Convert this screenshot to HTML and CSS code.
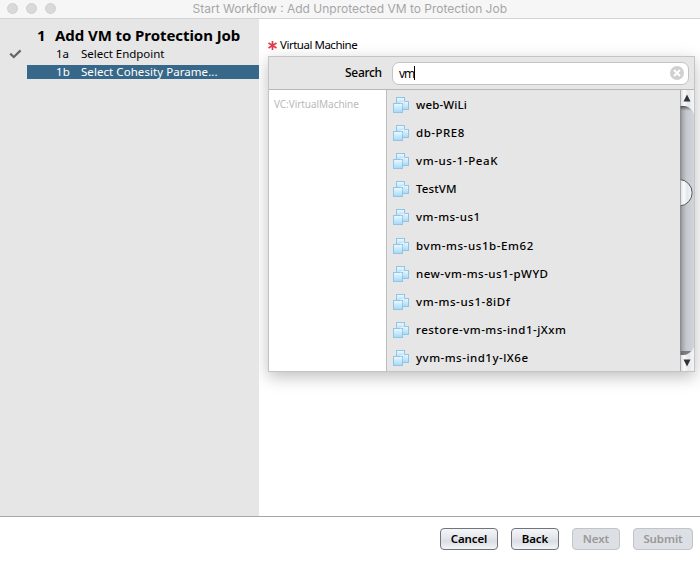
FILE: index.html
```html
<!DOCTYPE html>
<html lang="en">
<head>
<meta charset="utf-8">
<title>Start Workflow</title>
<link rel="stylesheet" href="styles.css">
</head>
<body>
<svg width="0" height="0" class="defs">
  <defs>
    <linearGradient id="blue" x1="0" y1="0" x2="0" y2="1"><stop offset="0" stop-color="#eff9ff"/><stop offset="1" stop-color="#a0d9fb"/></linearGradient>
    <symbol id="vm" viewBox="0 0 16 16">
      <g fill="url(#blue)" stroke="#93c5e3" stroke-width="1">
        <rect x="3.5" y="0.5" width="8" height="8"/>
        <rect x="7.5" y="4.5" width="8" height="8"/>
        <rect x="0.5" y="6.5" width="9" height="9"/>
      </g>
      <path d="M7.500 6.500V4.500H11.500V8.500H9.500" fill="none" stroke="#c8e6f7"/>
    </symbol>
  </defs>
</svg>
<header class="titlebar">
  <div class="lights"><i></i><i></i><i></i></div>
  <h1><span>Start Workflow : Add Unprotected VM to Protection Job</span></h1>
</header>
<main class="body">
  <nav class="steps">
    <div class="step head"><span class="num">1</span><span class="label">Add VM to Protection Job</span></div>
    <div class="step done">
      <svg class="check" width="13" height="10" viewBox="0 0 13 10"><path d="M1.2 4.6 4.8 8 11.6 1.4" fill="none" stroke="#666" stroke-width="2.2"/></svg>
      <span class="num">1a</span><span class="label">Select Endpoint</span>
    </div>
    <div class="step active"><span class="num">1b</span><span class="label">Select Cohesity Parame...</span></div>
  </nav>
  <section class="content">
    <div class="field-label">
      <svg width="9" height="9" viewBox="0 0 9 9"><path d="M4.5 0v9M.5 2l8 5M8.5 2l-8 5" stroke="#e13c4e" stroke-width="1.7"/></svg>
      <span>Virtual Machine</span>
    </div>
    <div class="picker">
      <div class="search">
        <label>Search</label>
        <div class="input"><span class="query">vm</span><span class="caret"></span>
          <svg class="clear" width="14" height="14" viewBox="0 0 14 14"><circle cx="7" cy="7" r="7" fill="#d0d0d0"/><path d="M4 4l6 6M10 4l-6 6" stroke="#fff" stroke-width="2"/></svg>
        </div>
      </div>
      <div class="results">
        <div class="type">VC:VirtualMachine</div>
        <ul class="list">
          <li><svg><use href="#vm"/></svg><span class="tight">web-WiLi</span></li>
          <li><svg><use href="#vm"/></svg><span>db-PRE8</span></li>
          <li><svg><use href="#vm"/></svg><span class="wide">vm-us-1-PeaK</span></li>
          <li><svg><use href="#vm"/></svg><span class="tight">TestVM</span></li>
          <li><svg><use href="#vm"/></svg><span>vm-ms-us1</span></li>
          <li><svg><use href="#vm"/></svg><span class="wide">bvm-ms-us1b-Em62</span></li>
          <li><svg><use href="#vm"/></svg><span>new-vm-ms-us1-pWYD</span></li>
          <li><svg><use href="#vm"/></svg><span class="wide">vm-ms-us1-8iDf</span></li>
          <li><svg><use href="#vm"/></svg><span>restore-vm-ms-ind1-jXxm</span></li>
          <li><svg><use href="#vm"/></svg><span>yvm-ms-ind1y-lX6e</span></li>
        </ul>
        <svg class="scrollbar" width="14" height="281" viewBox="0 0 14 281">
          <defs>
            <linearGradient id="track"><stop offset="0" stop-color="#77787c"/><stop offset=".15" stop-color="#a5a7ac"/><stop offset=".45" stop-color="#c5c7cd"/><stop offset="1" stop-color="#d2d5dc"/></linearGradient>
            <linearGradient id="btn"><stop offset="0" stop-color="#d6d8dc"/><stop offset=".3" stop-color="#fafafa"/><stop offset=".6" stop-color="#e5e7ea"/><stop offset="1" stop-color="#f5f6f7"/></linearGradient>
            <linearGradient id="shade" x1="0" y1="0" x2="0" y2="1"><stop offset="0" stop-color="#333" stop-opacity=".85"/><stop offset="1" stop-color="#777" stop-opacity="0"/></linearGradient>
          </defs>
          <rect width="14" height="281" fill="url(#btn)"/>
          <path d="M0 16H3Q11 16 14 24V257Q11 265 3 265H0Z" fill="url(#track)"/>
          <path d="M0 16H3Q9 16 12 21H0Z" fill="url(#shade)"/>
          <path d="M0 265H3Q8 265 11 261H0Z" fill="#555" opacity=".65"/>
          <path d="M0 89.500A13.300 13.300 0 0 1 0 116Z" fill="url(#btn)"/>
          <path d="M0 89.500A13.300 13.300 0 0 1 0 116" fill="none" stroke="#555"/>
          <path d="M.5 0V281" stroke="#909399" stroke-opacity=".7"/>
          <path d="M7 4.500L10.500 11.500H3.500ZM7 276.500L10.500 269.500H3.500Z" fill="#333"/>
        </svg>
      </div>
    </div>
  </section>
</main>
<footer class="actions">
  <button class="cancel">Cancel</button>
  <button class="back">Back</button>
  <button class="next" disabled>Next</button>
  <button class="submit" disabled>Submit</button>
</footer>
</body>
</html>
```
FILE: styles.css
```css
* { box-sizing: border-box; }
body { margin: 0; width: 700px; height: 561px; display: flex; flex-direction: column; overflow: hidden; background: #fff; color: #000; font: 12px/18px "Noto Sans", sans-serif; }
.defs { position: absolute; }
span { white-space: nowrap; }
.titlebar { height: 19px; flex: none; display: flex; background: #f6f6f6; border-bottom: 1px solid #d3d3d3; }
.lights { display: flex; gap: 7.500px; padding: 2.500px 0 0 6.500px; width: 192.500px; }
.lights i { width: 11.500px; height: 11.500px; border-radius: 50%; background: #d9d9d9; border: 1px solid #d0d0d0; }
h1 { margin: 0; font: 400 12px/18px Inter, sans-serif; color: #a6a6a6; }
.body { flex: 1; display: flex; min-height: 0; }
.steps { width: 259px; flex: none; background: #e6e6e6; padding-top: 5px; }
.step { display: flex; align-items: center; height: 18px; font-size: 11.500px; letter-spacing: -.02px; padding-left: 56px; }
.step .num { width: 25px; }
.step.head { height: 21px; padding-left: 37px; font-size: 15px; font-weight: 700; letter-spacing: -.07px; }
.step.head .num { width: 18px; }
.step.done { padding-left: 9px; }
.check { margin-right: 34px; }
.step.active { height: 14px; margin: 2px 0 0 27px; padding-left: 29px; background: #386889; color: #fff; letter-spacing: .06px; }
.content { flex: 1; padding: 17px 5px 0 9px; }
.field-label { display: flex; align-items: center; height: 18px; gap: 3px; font-size: 11.500px; letter-spacing: -.48px; }
.picker { width: 427px; height: 316px; margin: 2px 0 0; border: 1px solid #c4c4c4; background: #e6e6e6; box-shadow: 0 5px 15px rgba(0,0,0,.25); clip-path: inset(-30px -30px -30px -9px); }
.search { height: 33px; display: flex; align-items: center; border-bottom: 1px solid #b7b7b7; }
.search label { width: 123px; padding-left: 76px; font-size: 12px; font-weight: 500; letter-spacing: -.3px; }
.input { flex: 1; height: 23px; margin-right: 5px; padding: 0 4px 0 6px; display: flex; align-items: center; border: 1px solid #c3c3c3; border-radius: 7px; background: #fff; }
.query { letter-spacing: -1px; padding-top: 2px; }
.caret { width: 1px; height: 14px; background: #000; }
.clear { margin-left: auto; }
.results { display: flex; height: 281px; }
.type { width: 118px; padding: 5px 0 0 5px; background: #fff; border-right: 1px solid #bdbdbd; color: #b9b9b9; font-size: 10px; letter-spacing: -.05px; }
.list { flex: 1; margin: 0; padding: 1px 0 0 6px; list-style: none; }
.list li { height: 28.100px; display: flex; align-items: center; gap: 7px; font-size: 11.500px; font-weight: 500; letter-spacing: .5px; }
.list .tight { letter-spacing: .13px; }
.list .wide { letter-spacing: .6px; }
.list svg { width: 16px; height: 16px; }
.scrollbar { flex: none; height: 281px; }
.actions { height: 45px; flex: none; display: flex; justify-content: flex-end; gap: 13px; padding: 11px 7px 0 0; border-top: 1px solid #a7a7a7; }
button { height: 22px; padding: 0 0 1px; border: 1px solid #70757c; border-radius: 4px; background: linear-gradient(#f4f5f7 0%, #e4e6eb 45%, #dadde4 60%, #f4f4f8 100%); color: #000; font: 600 11.500px/19px "Noto Sans", sans-serif; letter-spacing: -.1px; }
button:disabled { color: #999; border-color: #c1c4c9; background: #dcdfe4; }
.cancel { width: 58px; }
.back { width: 48px; }
.next { width: 48px; }
.submit { width: 60px; }
```
